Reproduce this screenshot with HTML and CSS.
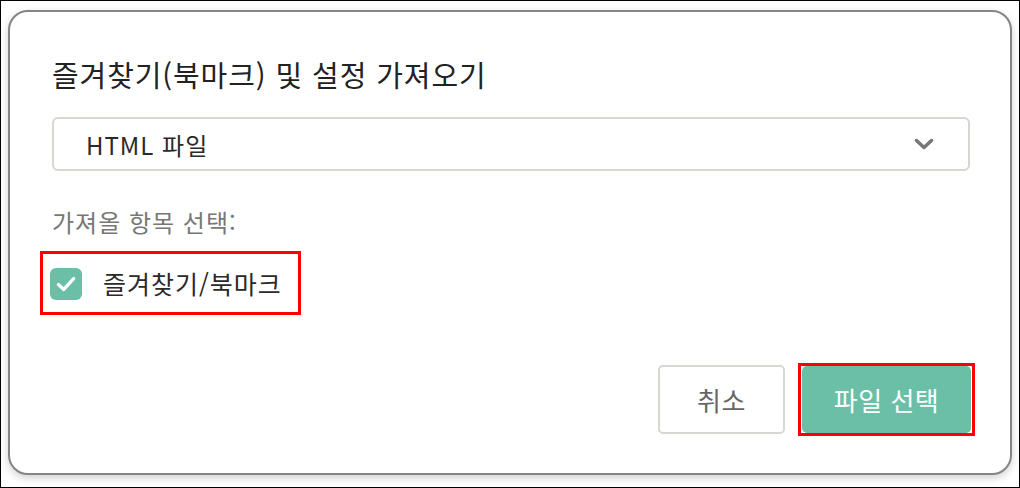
FILE: index.html
```html
<!DOCTYPE html>
<html lang="ko">
<head>
    <meta charset="UTF-8">
    <title>가져오기</title>
    <link rel="stylesheet" href="styles.css">
</head>
<body>
<div class="frame">
    <div class="dialog">
        <div class="title">즐겨찾기(북마크) 및 설정 가져오기</div>

        <div class="select">
            <span class="selectText">HTML 파일</span>
            <svg class="chevron" width="20" height="12" viewBox="0 0 20 12">
                <path d="M2.5 2.5 L10 9.5 L17.5 2.5" fill="none" stroke="#777" stroke-width="3.5" stroke-linecap="round" stroke-linejoin="round"/>
            </svg>
        </div>

        <div class="sectionLabel">가져올 항목 선택:</div>

        <div class="checkRow">
            <span class="checkBox">
                <svg width="24" height="24" viewBox="0 0 22 22">
                    <path d="M4 11.5 L9 16 L18 6" fill="none" stroke="#fff" stroke-width="3" stroke-linecap="round" stroke-linejoin="round"/>
                </svg>
            </span>
            <span class="checkText">즐겨찾기/북마크</span>
        </div>

        <div class="buttons">
            <button class="btn btnCancel">취소</button>
            <span class="okMark">
                <button class="btn btnOk">파일 선택</button>
            </span>
        </div>
    </div>
</div>
</body>
</html>
```

FILE: styles.css
```css
html, body {
    margin: 0;
    padding: 0;
    background-color: #fff;
}
.frame {
    width: 1020px;
    height: 488px;
    box-sizing: border-box;
    border: 1px solid #000;
    padding: 9px 0 0 7px;
    font-family: "Noto Sans CJK KR", "Noto Sans", sans-serif;
}
.dialog {
    width: 1004px;
    height: 465px;
    box-sizing: border-box;
    border: 2px solid #858585;
    border-radius: 20px;
    box-shadow: 0 3px 9px rgba(0, 0, 0, 0.18);
    padding: 43px 40px 0 42px;
    display: flex;
    flex-direction: column;
    background: #fff;
}
.title {
    font-size: 29px;
    line-height: 38px;
    color: #222;
    letter-spacing: 0.9px;
}
.select {
    margin-top: 24px;
    height: 54px;
    box-sizing: border-box;
    border: 2px solid #d6d6d2;
    border-radius: 6px;
    display: flex;
    align-items: center;
    justify-content: space-between;
    padding: 0 34px 0 32px;
}
.selectText {
    font-size: 24px;
    color: #2a2a2a;
    letter-spacing: 1px;
}
.sectionLabel {
    margin-top: 35px;
    font-size: 24px;
    line-height: 32px;
    color: #777;
    letter-spacing: 1px;
}
.checkRow {
    margin-top: 13px;
    margin-left: -12px;
    width: 261px;
    height: 64px;
    box-sizing: border-box;
    border: 3px solid #f00;
    display: flex;
    align-items: center;
    padding-left: 7px;
}
.checkBox {
    width: 32px;
    height: 32px;
    border-radius: 6px;
    background: #6bbfa7;
    display: flex;
    align-items: center;
    justify-content: center;
    margin-top: 2px;
}
.checkText {
    margin-left: 21px;
    font-size: 25px;
    color: #2a2a2a;
    letter-spacing: 1px;
}
.buttons {
    margin-top: 48px;
    display: flex;
    justify-content: flex-end;
    align-items: center;
    margin-right: -5px;
}
.btn {
    font-family: "Noto Sans CJK KR", "Noto Sans", sans-serif;
    font-size: 26px;
    border-radius: 5px;
    cursor: pointer;
    letter-spacing: 0.5px;
}
.btnCancel {
    width: 127px;
    height: 69px;
    background: #fff;
    border: 2px solid #d6d6d2;
    color: #666;
}
.okMark {
    margin-left: 13px;
    border: 3px solid #f00;
    padding: 0 1px;
    display: flex;
}
.btnOk {
    width: 169px;
    height: 67px;
    background: #6bbfa7;
    border: none;
    color: #fff;
}
```
